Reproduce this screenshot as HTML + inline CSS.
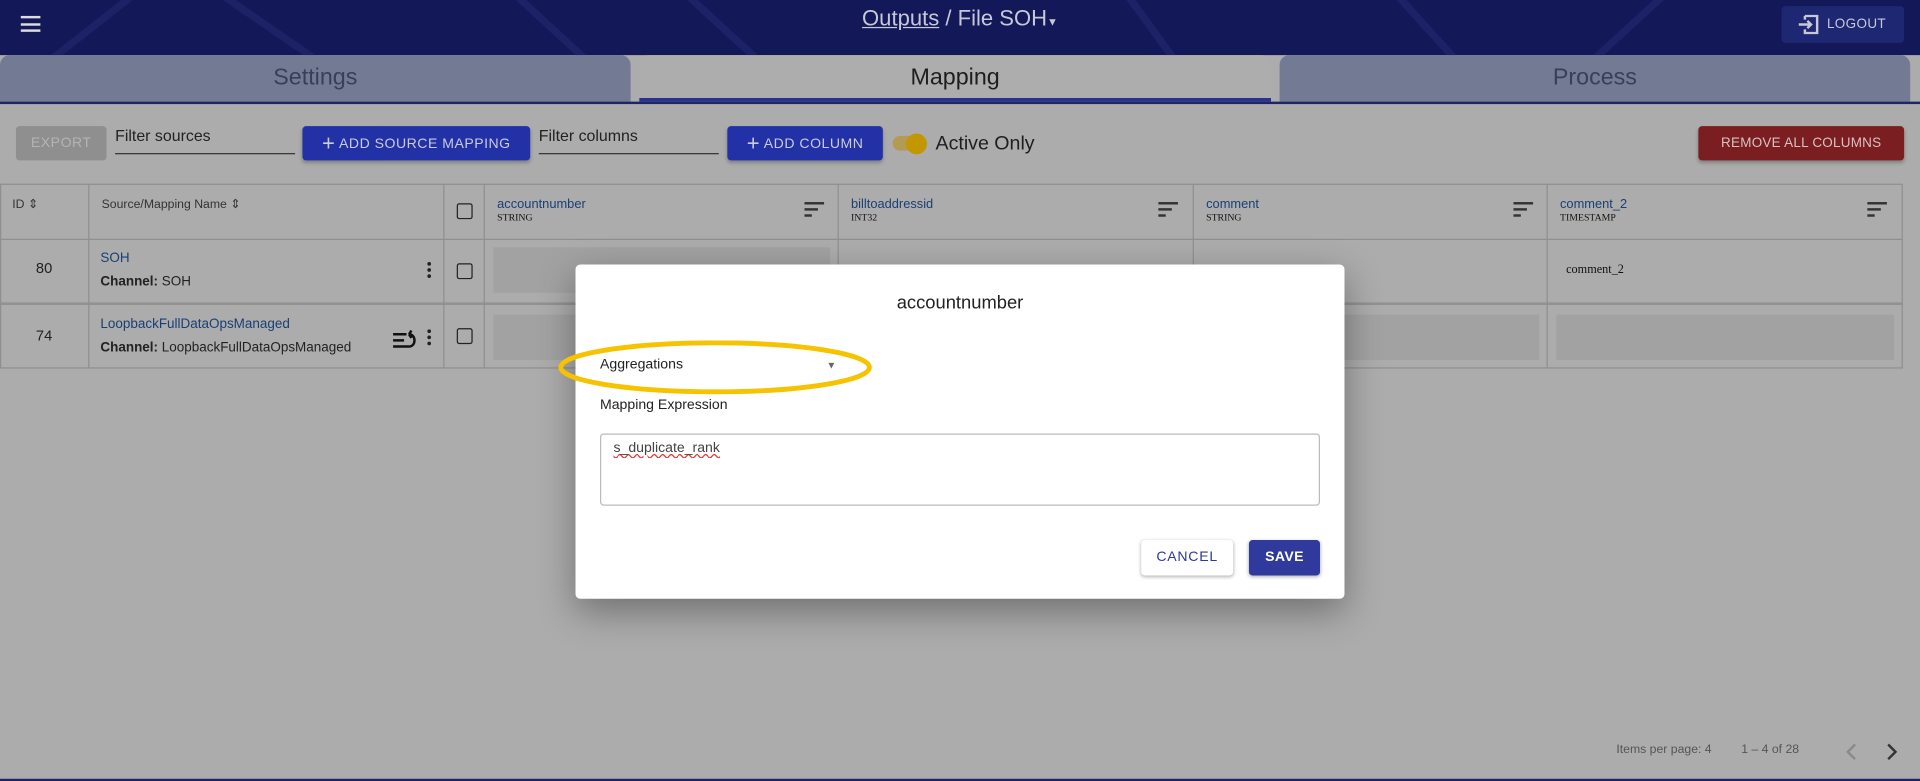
<!DOCTYPE html>
<html><head><meta charset="utf-8"><style>
*{box-sizing:border-box;margin:0;padding:0}
html,body{width:1920px;height:781px;overflow:hidden;background:#acacac}
#w{position:absolute;left:0;top:0;width:1568px;height:638px;transform:scale(1.22449);transform-origin:0 0;font-family:"Liberation Sans",Arial,sans-serif;background:#acacac;overflow:hidden}
.a{position:absolute}
.hdr{left:0;top:0;width:1568px;height:45px;background:#121858;overflow:hidden}
.tab{top:45px;height:38px;border-radius:8px 8px 0 0;text-align:center;font-size:19px;line-height:38px}
.btn{border-radius:3px;color:#c9cbe0;font-size:11.5px;letter-spacing:.4px;text-align:center;line-height:28px;height:28px;top:103px;box-shadow:0 2px 3px rgba(0,0,0,.25);white-space:nowrap}
.inp{top:103px;font-size:13px;color:#222;border-bottom:1px solid #333;height:23px}
.cell{border-right:1px solid #8f8f8f;border-bottom:1px solid #8f8f8f}
.hd{font-size:10.5px;color:#1a3f74}
.ty{font-family:"Liberation Serif",serif;font-size:8px;color:#111}
.chk{width:13px;height:13px;border:1.5px solid #222;border-radius:2px}
.flt{width:16px}
.flt i{display:block;height:2px;background:#333;margin-bottom:3px}
.ph{background:#a2a2a2}
</style></head><body><div id="w">
<div class="a hdr">
<svg class="a" style="left:0;top:0" width="1568" height="45"><g stroke="#1c2266" stroke-width="6" fill="none"><path d="M40 50 L110 -5 M180 -5 L260 50 M420 -5 L480 50 M560 -5 L620 50 M920 -5 L960 50 M1140 -5 L1190 50 M1300 50 L1360 -5"/></g></svg>
<div class="a" style="left:17px;top:13px;width:16px"><div style="height:2px;background:#ddd;margin-bottom:3.5px"></div><div style="height:2px;background:#ddd;margin-bottom:3.5px"></div><div style="height:2px;background:#ddd"></div></div>
<div class="a" style="left:0;width:1568px;top:5px;text-align:center;font-size:18px;color:#c6c8d8"><span style="text-decoration:underline">Outputs</span> / File SOH<span style="font-size:9px">▼</span></div>
<div class="a" style="left:1455px;top:5px;width:100px;height:30px;background:#1e2771;border-radius:3px;color:#c6c8d8;font-size:11px;line-height:30px;letter-spacing:.3px"><svg class="a" style="left:13px;top:7px" width="18" height="16" viewBox="0 0 18 16"><path d="M6 1H16V15H6V12M6 4V1M1 8H11M8 5L11 8L8 11" stroke="#c6c8d8" stroke-width="2" fill="none"/></svg><span class="a" style="left:37px">LOGOUT</span></div>
</div>
<div class="a tab" style="left:0;width:515px;background:#737a94;color:#3a3f58">Settings</div>
<div class="a tab" style="left:522px;width:516px;background:#adadad;color:#1e1e1e;border-bottom:3px solid #2a3290">Mapping</div>
<div class="a tab" style="left:1045px;width:515px;background:#737a94;color:#3a3f58">Process</div>
<div class="a" style="left:0;top:83px;width:1568px;height:2px;background:#1e2566"></div>
<div class="a btn" style="left:13px;width:74px;background:#8f8f8f;color:#b4b4b4;box-shadow:none">EXPORT</div>
<div class="a inp" style="left:94px;width:147px">Filter sources</div>
<div class="a btn" style="left:247px;width:186px;background:#2331a6"><b style="font-size:18px;font-weight:normal;vertical-align:-2px">+</b> ADD SOURCE MAPPING</div>
<div class="a inp" style="left:440px;width:147px">Filter columns</div>
<div class="a btn" style="left:594px;width:127px;background:#2331a6"><b style="font-size:18px;font-weight:normal;vertical-align:-2px">+</b> ADD COLUMN</div>
<div class="a" style="left:729px;top:111px;width:24px;height:12px;border-radius:6px;background:#b39a55"></div>
<div class="a" style="left:740px;top:109px;width:17px;height:17px;border-radius:50%;background:#c29700"></div>
<div class="a" style="left:764px;top:109px;font-size:16px;color:#1e1e1e">Active Only</div>
<div class="a btn" style="left:1387px;width:168px;background:#7a1e22;color:#d7c2c2;font-size:11px;letter-spacing:.2px">REMOVE ALL COLUMNS</div>
<!-- table -->
<div class="a" style="left:0;top:150px;width:1554px;height:151px;border-top:1px solid #8f8f8f;border-left:1px solid #8f8f8f"></div>
<div class="a cell" style="left:0;top:151px;width:73px;height:45px;font-size:10px;color:#333;padding:11px 10px">ID ⇕</div>
<div class="a cell" style="left:73px;top:151px;width:290px;height:45px;font-size:10px;color:#333;padding:11px 10px">Source/Mapping Name ⇕</div>
<div class="a cell" style="left:363px;top:151px;width:33px;height:45px"><div class="a chk" style="left:10px;top:15px"></div></div>
<div class="a cell" style="left:396px;top:151px;width:289px;height:45px;padding:10px 10px"><div class="hd">accountnumber</div><div class="ty">STRING</div><div class="a flt" style="left:261px;top:14px"><i></i><i style="width:11px"></i><i style="width:6px"></i></div></div>
<div class="a cell" style="left:685px;top:151px;width:290px;height:45px;padding:10px 10px"><div class="hd">billtoaddressid</div><div class="ty">INT32</div><div class="a flt" style="left:261px;top:14px"><i></i><i style="width:11px"></i><i style="width:6px"></i></div></div>
<div class="a cell" style="left:975px;top:151px;width:289px;height:45px;padding:10px 10px"><div class="hd">comment</div><div class="ty">STRING</div><div class="a flt" style="left:261px;top:14px"><i></i><i style="width:11px"></i><i style="width:6px"></i></div></div>
<div class="a cell" style="left:1264px;top:151px;width:290px;height:45px;padding:10px 10px"><div class="hd">comment_2</div><div class="ty">TIMESTAMP</div><div class="a flt" style="left:261px;top:14px"><i></i><i style="width:11px"></i><i style="width:6px"></i></div></div>
<!-- row1 -->
<div class="a cell" style="left:0;top:196px;width:73px;height:52px;font-size:12px;color:#222;text-align:center;line-height:46px">80</div>
<div class="a cell" style="left:73px;top:196px;width:290px;height:52px;font-size:11px;padding:9px 9px"><div style="color:#1a3f74;margin-bottom:7px">SOH</div><div style="color:#222"><b>Channel:</b> SOH</div><div class="a" style="left:276px;top:18px;width:3px"><i style="display:block;width:3px;height:3px;border-radius:50%;background:#222;margin-bottom:2px"></i><i style="display:block;width:3px;height:3px;border-radius:50%;background:#222;margin-bottom:2px"></i><i style="display:block;width:3px;height:3px;border-radius:50%;background:#222"></i></div></div>
<div class="a cell" style="left:363px;top:196px;width:33px;height:52px"><div class="a chk" style="left:10px;top:19px"></div></div>
<div class="a cell" style="left:396px;top:196px;width:289px;height:52px"><div class="a ph" style="left:7px;top:6px;width:275px;height:37px"></div></div>
<div class="a cell" style="left:685px;top:196px;width:290px;height:52px"></div>
<div class="a cell" style="left:975px;top:196px;width:289px;height:52px"></div>
<div class="a cell" style="left:1264px;top:196px;width:290px;height:52px;font-family:'Liberation Serif',serif;font-size:10px;color:#111;padding:19px 15px">comment_2</div>
<!-- row2 -->
<div class="a cell" style="left:0;top:248px;width:73px;height:53px;font-size:12px;color:#222;text-align:center;line-height:50px;border-top:1px solid #8f8f8f">74</div>
<div class="a cell" style="left:73px;top:248px;width:290px;height:53px;font-size:11px;padding:10px 9px;border-top:1px solid #8f8f8f"><div style="color:#1a3f74;margin-bottom:7px">LoopbackFullDataOpsManaged</div><div style="color:#222"><b>Channel:</b> LoopbackFullDataOpsManaged</div><svg class="a" style="left:247px;top:20px" width="22" height="16" viewBox="0 0 22 16"><path d="M1 4H12M1 9H10M1 14H14C20 14 20 4 14 4M14 4L16 1M14 4L16 7" stroke="#111" stroke-width="2" fill="none"/></svg><div class="a" style="left:276px;top:20px;width:3px"><i style="display:block;width:3px;height:3px;border-radius:50%;background:#222;margin-bottom:2px"></i><i style="display:block;width:3px;height:3px;border-radius:50%;background:#222;margin-bottom:2px"></i><i style="display:block;width:3px;height:3px;border-radius:50%;background:#222"></i></div></div>
<div class="a cell" style="left:363px;top:248px;width:33px;height:53px;border-top:1px solid #8f8f8f"><div class="a chk" style="left:10px;top:19px"></div></div>
<div class="a cell" style="left:396px;top:248px;width:289px;height:53px;border-top:1px solid #8f8f8f"><div class="a ph" style="left:7px;top:8px;width:275px;height:37px"></div></div>
<div class="a cell" style="left:685px;top:248px;width:290px;height:53px;border-top:1px solid #8f8f8f"></div>
<div class="a cell" style="left:975px;top:248px;width:289px;height:53px;border-top:1px solid #8f8f8f"><div class="a ph" style="left:7px;top:8px;width:275px;height:37px"></div></div>
<div class="a cell" style="left:1264px;top:248px;width:290px;height:53px;border-top:1px solid #8f8f8f"><div class="a ph" style="left:7px;top:8px;width:276px;height:37px"></div></div>
<!-- pagination -->
<div class="a" style="left:1320px;top:607px;font-size:10px;color:#555">Items per page: 4</div>
<div class="a" style="left:1422px;top:607px;font-size:10px;color:#555">1 – 4 of 28</div>
<svg class="a" style="left:1507px;top:607px" width="10" height="14"><path d="M8 1L2 7L8 13" stroke="#8a8a8a" stroke-width="2" fill="none"/></svg>
<svg class="a" style="left:1540px;top:607px" width="10" height="14"><path d="M2 1L8 7L2 13" stroke="#333" stroke-width="2" fill="none"/></svg>
<div class="a" style="left:0;top:636px;width:1568px;height:2px;background:#1e2566"></div>
<!-- dialog -->
<div class="a" style="left:470px;top:216px;width:628px;height:273px;background:#fff;border-radius:4px;box-shadow:0 10px 30px rgba(0,0,0,.35)">
<div class="a" style="left:0;width:628px;top:23px;text-align:center;font-size:15px;color:#222">accountnumber</div>
<div class="a" style="left:20px;top:76px;font-size:11.5px;color:#222">Aggregations</div>
<div class="a" style="left:205px;top:78px;font-size:8px;color:#666">▼</div>
<svg class="a" style="left:-14px;top:62px" width="258" height="46"><ellipse cx="128" cy="22" rx="126" ry="20" stroke="#f5c300" stroke-width="4" fill="none"/></svg>
<div class="a" style="left:20px;top:109px;font-size:11.5px;color:#222">Mapping Expression</div>
<div class="a" style="left:20px;top:138px;width:588px;height:59px;border:1px solid #bbb;border-radius:3px;padding:5px 10px;font-size:11.5px;color:#444"><span style="text-decoration:underline wavy #e33;text-decoration-thickness:1px">s_duplicate_rank</span></div>
<div class="a" style="left:462px;top:225px;width:75px;height:29px;border-radius:3px;box-shadow:0 1px 3px rgba(0,0,0,.3);color:#2e3a96;font-size:11.5px;letter-spacing:.6px;text-align:center;line-height:29px">CANCEL</div>
<div class="a" style="left:550px;top:225px;width:58px;height:29px;border-radius:3px;background:#2f3a9c;box-shadow:0 1px 3px rgba(0,0,0,.3);color:#fff;font-size:11.5px;font-weight:bold;letter-spacing:.3px;text-align:center;line-height:29px">SAVE</div>
</div>
</div></body></html>
